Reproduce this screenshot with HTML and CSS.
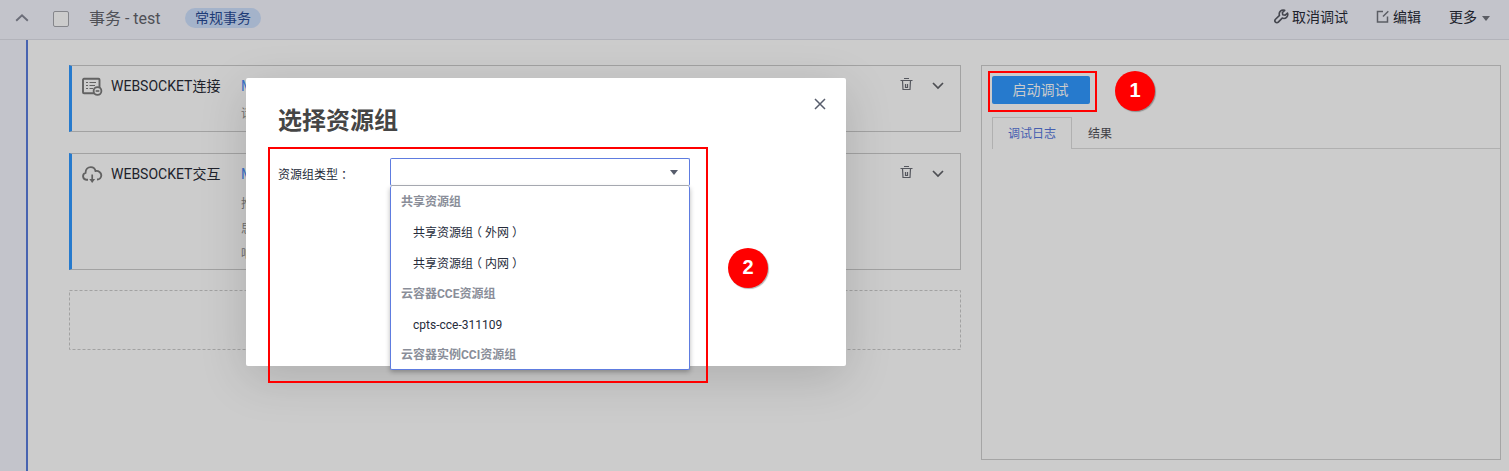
FILE: index.html
```html
<!DOCTYPE html>
<html lang="zh-CN">
<head>
<meta charset="utf-8">
<title>事务 - test</title>
<link rel="stylesheet" href="styles.css">
</head>
<body>
<div class="page">
  <header class="topbar">
    <svg class="collapse" width="14" height="8" viewBox="0 0 14 8"><path d="M1.2 6.8 7 1.4l5.800 5.400" fill="none" stroke="#6b6d78" stroke-width="1.9"/></svg>
    <span class="checkbox"></span>
    <h1 class="title">事务 - test</h1>
    <span class="tag">常规事务</span>
    <nav class="actions">
      <a class="action"><svg class="wrench" width="15" height="15" viewBox="0 0 15 15"><path d="M10.700 1.300A4 4 0 0 0 5.500 6.400L1.500 10.300a1.900 1.900 0 0 0 2.800 2.800L8.200 9.100A4 4 0 0 0 13.500 4L11.200 6.100 8.700 5.700 8.400 3.500Z" fill="none" stroke="#44464e" stroke-width="1.600" stroke-linejoin="round"/></svg>取消调试</a>
      <a class="action edit"><svg width="14" height="14" viewBox="0 0 14 14"><path d="M7 1.500H1.500v10.500h10V6.500M7 6.500 12.300 1.200" fill="none" stroke="#5b5d64" stroke-width="1.500"/></svg>编辑</a>
      <a class="action more">更多<span class="caret"></span></a>
    </nav>
  </header>

  <div class="workspace">
    <aside class="gutter"></aside>
    <main class="steps">
      <section class="card card-connect">
        <svg class="card-icon" width="21" height="20" viewBox="0 0 21 20"><rect x="1" y="1.800" width="16.500" height="14.500" rx="1" fill="none" stroke="#626262" stroke-width="1.900"/><path d="M4 5.500h2m1.500 0H14M4 8.500h2m1.500 0H13M4 11.500h2m1.500 0H11" stroke="#626262" stroke-width="1"/><circle cx="15.500" cy="14" r="3.900" fill="#ccc" stroke="#626262" stroke-width="1.800"/><path d="M13.700 14h3.600" stroke="#626262" stroke-width="1.600"/></svg>
        <h2 class="card-name">WEBSOCKET连接</h2>
        <div class="card-body"><b class="method">M</b><p>请</p></div>
        <div class="tools">
          <svg width="13" height="14" viewBox="0 0 13 14"><path d="M.5 3.500h12M4 1.500h5M2.500 3.500l.5 9h7l.5-9M5.500 7v3.500h2V7" fill="none" stroke="#55575e" stroke-width="1.200"/></svg>
          <svg width="12" height="8" viewBox="0 0 12 8"><path d="m1 1 5 5 5-5" fill="none" stroke="#4d4e53" stroke-width="1.700"/></svg>
        </div>
      </section>
      <section class="card card-exchange">
        <svg class="card-icon" width="21" height="20" viewBox="0 0 21 20"><path d="M6 14.700H4.200A3.500 3.500 0 0 1 3.500 7.900C3.500 4.200 6 2.100 8.800 2.100c2.800 0 4.300 1.700 4.700 3.900 3-.6 5.800 1.600 5.800 4.200 0 2.500-1.900 4.300-4.300 4.300" fill="none" stroke="#626262" stroke-width="1.900"/><path d="M10.200 9.500v6" stroke="#626262" stroke-width="1.700"/><path d="m7.300 14 2.900 4 2.900-4Z" fill="#626262"/></svg>
        <h2 class="card-name">WEBSOCKET交互</h2>
        <div class="card-body"><b class="method">M</b><p>推</p><p>思</p><p>响</p></div>
        <div class="tools">
          <svg width="13" height="14" viewBox="0 0 13 14"><path d="M.5 3.500h12M4 1.500h5M2.500 3.500l.5 9h7l.5-9M5.500 7v3.500h2V7" fill="none" stroke="#55575e" stroke-width="1.200"/></svg>
          <svg width="12" height="8" viewBox="0 0 12 8"><path d="m1 1 5 5 5-5" fill="none" stroke="#4d4e53" stroke-width="1.700"/></svg>
        </div>
      </section>
      <svg class="dropzone" width="892" height="60"><rect x=".5" y=".5" width="891" height="59" fill="none" stroke="#a2a2a2" stroke-dasharray="3 2"/></svg>
    </main>
    <section class="debug">
      <button class="start">启动调试</button>
      <div class="tabs"><span class="tab active">调试日志</span><span class="tab">结果</span></div>
    </section>
  </div>

  <div class="modal">
    <div class="modal-head">
      <h2 class="modal-title">选择资源组</h2>
      <svg class="close" width="12" height="12" viewBox="0 0 12 12"><path d="m1 1 10 10M11 1 1 11" stroke="#575d6c" stroke-width="1.500"/></svg>
    </div>
    <div class="field">
      <label class="label">资源组类型<span class="close-mark">：</span></label>
      <div class="select">
        <span class="select-caret"></span>
        <div class="menu">
          <div class="group">共享资源组</div>
          <div class="option">共享资源组<span class="open-mark">（</span>外网<span class="close-mark">）</span></div>
          <div class="option">共享资源组<span class="open-mark">（</span>内网<span class="close-mark">）</span></div>
          <div class="group">云容器CCE资源组</div>
          <div class="option">cpts-cce-311109</div>
          <div class="group">云容器实例CCI资源组</div>
        </div>
      </div>
    </div>
  </div>

  <div class="callout callout-start"></div>
  <div class="callout callout-group"></div>
  <div class="badge badge-one">1</div>
  <div class="badge badge-two">2</div>
</div>
</body>
</html>
```
FILE: styles.css
```css
* { box-sizing: border-box; }
body { margin: 0; }
h1, h2, p { margin: 0; font-weight: 400; }
svg { display: block; flex: none; }

.page {
  position: relative;
  width: 1509px;
  height: 471px;
  overflow: hidden;
  display: flex;
  flex-direction: column;
  background: #ccc;
  color: #20222b;
  font: 14px/20px Roboto, "Noto Sans CJK SC", sans-serif;
}

.topbar {
  flex: none;
  height: 40px;
  padding: 0 18px 4px 15px;
  display: flex;
  align-items: center;
  background: #c3c4cb;
  border-bottom: 1px solid #b2b3ba;
}
.checkbox {
  width: 16px;
  height: 16px;
  margin: 2px 0 0 24px;
  border: 1px solid #85868b;
  border-radius: 2px;
  background: #ccc;
}
.title { margin: 2px 0 0 20px; font-size: 16px; color: #4f5056; white-space: nowrap; }
.tag {
  width: 76px;
  height: 20px;
  margin-left: 24px;
  border-radius: 10px;
  background: #a4b3ca;
  color: #1d3b77;
  text-align: center;
  text-indent: 1px;
  line-height: 20px;
}
.actions { margin: -2px 0 0 auto; display: flex; }
.action { display: flex; align-items: center; white-space: nowrap; }
.wrench { margin-right: 3px; }
.edit { margin-left: 28px; }
.edit svg { margin-right: 3px; }
.more { margin-left: 28px; }
.caret { margin: 3px 1px 0 5px; border: 4px solid transparent; border-top: 5px solid #5b5d64; border-bottom: 0; }

.workspace { flex: 1; display: flex; }
.gutter { width: 28px; background: #c3c4cb; border-right: 2px solid #4763b0; }
.steps { width: 892px; margin: 25px 20px 0 41px; }
.card {
  display: flex;
  align-items: flex-start;
  padding: 0 16px 0 10px;
  border: 1px solid #a2a2a2;
  border-left: 3px solid #267acd;
  overflow: hidden;
}
.card-connect { height: 67px; }
.card-exchange { height: 117px; margin-top: 21px; }
.card-icon { margin-top: 11px; }
.card-name { width: 131px; margin: 10px 0 0 8px; font-size: 14px; white-space: nowrap; }
.card-body { margin: 10px 0 0 -1px; font-size: 12px; color: #6f6f6f; }
.card-body p { line-height: 25px; }
.method { display: block; height: 26px; font-size: 14px; font-weight: 400; color: #3c70c8; }
.card-exchange p:nth-child(2) { margin-top: 2px; }
.tools { display: flex; align-items: center; gap: 19px; margin: 11px 0 0 auto; }
.tools svg + svg { margin-top: 4px; }
.dropzone { margin-top: 20px; }

.debug { width: 520px; height: 395px; margin-top: 25px; padding: 10px 0 0 10px; border: 1px solid #a5a5a5; }
.start {
  display: block;
  width: 98px;
  height: 28px;
  padding: 0 1px 0 0;
  border: 0;
  border-radius: 2px;
  background: #267acd;
  color: #ccc;
  font: 14px/28px Roboto, "Noto Sans CJK SC", sans-serif;
}
.tabs { display: flex; height: 32px; margin-top: 13px; font-size: 12px; line-height: 34px; color: #3f4046; background: linear-gradient(#b0b0b0, #b0b0b0) 0 100% / 100% 1px no-repeat; }
.tab { padding-left: 16px; }
.active { width: 80px; padding-left: 15px; line-height: 32px; border: 1px solid #b0b0b0; border-bottom: 0; color: #465eb0; background: #ccc; }

.modal {
  position: absolute;
  left: 246px;
  top: 78px;
  width: 600px;
  height: 288px;
  padding: 20px 20px 0 32px;
  border-radius: 2px;
  background: #fff;
  box-shadow: 0 12px 48px rgba(0, 0, 0, .15);
}
.modal-head { display: flex; justify-content: space-between; height: 60px; }
.modal-title { font-size: 24px; line-height: 46px; font-weight: 700; color: #454545; }
.close { width: 12px; height: 12px; }
.field { display: flex; color: #252b3a; font-size: 12px; }
.label { width: 112px; line-height: 34px; height: 32px; }
.open-mark { margin: 0 3px 0 -3px; }
.close-mark { margin: 0 -3px 0 3px; }
.select { position: relative; width: 300px; height: 28px; border: 1px solid #5e7ce0; border-bottom-color: #adb0b8; border-radius: 2px; }
.select-caret { position: absolute; right: 11px; top: 11px; border: 4px solid transparent; border-top: 5px solid #575d6c; border-bottom: 0; }
.menu {
  position: absolute;
  left: -1px;
  top: 27px;
  width: 300px;
  height: 184px;
  padding-top: 1px;
  border: 1px solid #5e7ce0;
  border-top: 0;
  border-radius: 2px;
  background: #fff;
  box-shadow: 0 2px 5px rgba(0, 0, 0, .28);
}
.group { height: 30px; padding-left: 10px; line-height: 31px; font-weight: 700; color: #8a8e99; }
.option { height: 31px; padding-left: 22px; line-height: 32px; }

.callout { position: absolute; border: 2px solid #f00; }
.callout-start { left: 988px; top: 71px; width: 109px; height: 41px; }
.callout-group { left: 268px; top: 147px; width: 440px; height: 236px; }
.badge {
  position: absolute;
  width: 40px;
  height: 40px;
  border-radius: 50%;
  background: #f00;
  color: #fff;
  font: 700 20px/39px "Liberation Sans", sans-serif;
  text-align: center;
  box-shadow: 1px 1px 1px rgba(0, 0, 0, .3);
}
.badge-one { left: 1115px; top: 71px; }
.badge-two { left: 728px; top: 248px; }
```
